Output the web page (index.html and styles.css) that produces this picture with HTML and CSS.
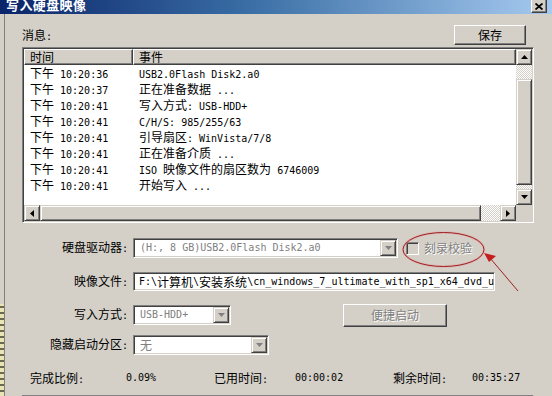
FILE: index.html
```html
<!DOCTYPE html>
<html lang="zh-CN">
<head>
    <meta charset="UTF-8">
    <title>写入硬盘映像</title>
    <link rel="stylesheet" href="styles.css">
</head>
<body>
    <div class="titlebar">
        <span class="title">写入硬盘映像</span>
        <span class="close">
            <svg width="8" height="7" viewBox="0 0 8 7"><path d="M0.5 0.5 L7.5 6.5 M7.5 0.5 L0.5 6.5" stroke="#000" stroke-width="1.8" fill="none"/></svg>
        </span>
    </div>

    <div class="frame">
        <div class="behind"></div>

        <div class="dlg">
            <!-- 消息 -->
            <div class="msg-head">
                <span class="lbl">消息<span class="m">:</span></span>
                <button class="btn save">保存</button>
            </div>

            <div class="list">
                <div class="list-view">
                    <div class="list-header">
                        <div class="hcell">时间</div>
                        <div class="hcell">事件</div>
                    </div>
                    <div class="row"><div class="c1">下午<span class="m"> 10:20:36</span></div><div class="c2"><span class="m">USB2.0Flash Disk2.a0</span></div></div>
                    <div class="row"><div class="c1">下午<span class="m"> 10:20:37</span></div><div class="c2">正在准备数据<span class="m"> ...</span></div></div>
                    <div class="row"><div class="c1">下午<span class="m"> 10:20:41</span></div><div class="c2">写入方式<span class="m">: USB-HDD+</span></div></div>
                    <div class="row"><div class="c1">下午<span class="m"> 10:20:41</span></div><div class="c2"><span class="m">C/H/S: 985/255/63</span></div></div>
                    <div class="row"><div class="c1">下午<span class="m"> 10:20:41</span></div><div class="c2">引导扇区<span class="m">: WinVista/7/8</span></div></div>
                    <div class="row"><div class="c1">下午<span class="m"> 10:20:41</span></div><div class="c2">正在准备介质<span class="m"> ...</span></div></div>
                    <div class="row"><div class="c1">下午<span class="m"> 10:20:41</span></div><div class="c2"><span class="m">ISO </span>映像文件的扇区数为<span class="m"> 6746009</span></div></div>
                    <div class="row"><div class="c1">下午<span class="m"> 10:20:41</span></div><div class="c2">开始写入<span class="m"> ...</span></div></div>
                </div>

                <div class="vscroll">
                    <div class="sbtn"><svg width="7" height="4" viewBox="0 0 7 4"><path d="M3.5 0 L7 4 L0 4 Z" fill="#000"/></svg></div>
                    <div class="track" style="height: 14px"></div>
                    <div class="thumb" style="height: 106px"></div>
                    <div class="track fill"></div>
                    <div class="sbtn"><svg width="7" height="4" viewBox="0 0 7 4"><path d="M0 0 L7 0 L3.5 4 Z" fill="#000"/></svg></div>
                </div>

                <div class="hscroll">
                    <div class="sbtn"><svg width="4" height="7" viewBox="0 0 4 7"><path d="M0 3.5 L4 0 L4 7 Z" fill="#000"/></svg></div>
                    <div class="thumb" style="width: 441px"></div>
                    <div class="track fill"></div>
                    <div class="sbtn"><svg width="4" height="7" viewBox="0 0 4 7"><path d="M0 0 L4 3.5 L0 7 Z" fill="#000"/></svg></div>
                </div>

                <div class="corner"></div>
            </div>

            <!-- 设置 -->
            <div class="form">
                <div class="frow r1">
                    <span class="lab">硬盘驱动器<span class="m">:</span></span>
                    <div class="combo w-drive">
                        <span class="val m">(H:, 8 GB)USB2.0Flash Disk2.a0</span>
                        <span class="drop"><svg width="7" height="4" viewBox="0 0 7 4"><path d="M0 0 L7 0 L3.5 4 Z" fill="#808080"/></svg></span>
                    </div>
                    <span class="check"></span>
                    <span class="check-lbl">刻录校验</span>
                </div>

                <div class="frow r2">
                    <span class="lab">映像文件<span class="m">:</span></span>
                    <div class="edit"><span class="m">F:\</span>计算机<span class="m">\</span>安装系统<span class="m">\cn_windows_7_ultimate_with_sp1_x64_dvd_u</span></div>
                </div>

                <div class="frow r3">
                    <span class="lab">写入方式<span class="m">:</span></span>
                    <div class="combo w-mode">
                        <span class="val m">USB-HDD+</span>
                        <span class="drop"><svg width="7" height="4" viewBox="0 0 7 4"><path d="M0 0 L7 0 L3.5 4 Z" fill="#808080"/></svg></span>
                    </div>
                    <button class="btn quick" disabled>便捷启动</button>
                </div>

                <div class="frow r4">
                    <span class="lab">隐藏启动分区<span class="m">:</span></span>
                    <div class="combo w-hide">
                        <span class="val">无</span>
                        <span class="drop"><svg width="7" height="4" viewBox="0 0 7 4"><path d="M0 0 L7 0 L3.5 4 Z" fill="#808080"/></svg></span>
                    </div>
                </div>
            </div>

            <div class="stats">
                <span>完成比例<span class="m">:</span></span>
                <span class="m">0.09%</span>
                <span>已用时间<span class="m">:</span></span>
                <span class="m">00:00:02</span>
                <span>剩余时间<span class="m">:</span></span>
                <span class="m">00:35:27</span>
            </div>

            <div class="progress"></div>
        </div>
    </div>

    <!-- 红色标注 -->
    <svg class="annot" width="552" height="396" viewBox="0 0 552 396">
        <ellipse cx="443.5" cy="249.5" rx="40.5" ry="17" fill="none" stroke="#e8a0a0" stroke-width="2.5" opacity="0.5"/>
        <ellipse cx="443.5" cy="249.5" rx="40.5" ry="17" fill="none" stroke="#9c2020" stroke-width="1"/>
        <line x1="518" y1="291" x2="490" y2="258" stroke="#9c2020" stroke-width="1"/>
        <polygon points="484,253 489,262 496,256" fill="#c41e1e"/>
    </svg>
</body>
</html>
```

FILE: styles.css
```css
* {
    box-sizing: border-box;
}

body {
    margin: 0;
    width: 552px;
    height: 396px;
    overflow: hidden;
    position: relative;
    background: #d4d0c8;
    color: #000;
    font-family: "Noto Sans CJK SC", sans-serif;
    font-size: 12px;
}

.m {
    font-family: "DejaVu Sans Mono", monospace;
    font-size: 10px;
}

/* title bar */
.titlebar {
    height: 14px;
    display: flex;
    justify-content: space-between;
    padding: 0 5px 0 6px;
    background: linear-gradient(to right, #0a246a, #3a6ea5 45%, #a6caf0);
    overflow: hidden;
}

.title {
    color: #fff;
    font-weight: bold;
    font-size: 13px;
    line-height: 10px;
    letter-spacing: 0.4px;
}

.close {
    width: 16px;
    height: 13px;
    display: flex;
    align-items: center;
    justify-content: center;
    background: #d4d0c8;
    border-right: 1px solid #404040;
    border-bottom: 1px solid #404040;
    border-left: 1px solid #fff;
    box-shadow: inset -1px -1px #808080;
}

/* body */
.frame {
    display: flex;
    height: 382px;
}

.behind {
    width: 5px;
    border-right: 1px solid #808080;
    background:
        linear-gradient(#d4d0c8 0 290px, transparent 290px),
        repeating-linear-gradient(#e8e4b4 0 4px, #6a6a50 4px 6px),
        #f0efe8;
}

.dlg {
    flex: 1;
    padding: 11px 18px 0 17px;
}

.msg-head {
    display: flex;
    justify-content: space-between;
    height: 22px;
}

.msg-head .lbl {
    align-self: flex-end;
    line-height: 16px;
    padding-bottom: 2px;
}

.btn {
    font: inherit;
    padding: 0;
    color: #000;
    background: #d4d0c8;
    border: 1px solid;
    border-color: #fff #404040 #404040 #fff;
    box-shadow: inset -1px -1px #808080;
    line-height: 16px;
}

.save {
    width: 72px;
    height: 20px;
    margin-right: 8px;
}

/* list */
.list {
    width: 512px;
    height: 176px;
    display: grid;
    grid-template-columns: 1fr 16px;
    grid-template-rows: 1fr 16px;
    border: 1px solid;
    border-color: #808080 #fff #fff #808080;
    box-shadow: inset 1px 1px #404040, inset -1px -1px #d4d0c8;
    padding: 1px;
}

.list-view {
    background: #fff;
    overflow: hidden;
}

.list-header,
.row {
    display: grid;
    grid-template-columns: 109px 1fr;
}

.hcell {
    height: 16px;
    line-height: 14px;
    padding-left: 5px;
    background: #d4d0c8;
    border: 1px solid;
    border-color: #fff #404040 #404040 #fff;
    box-shadow: inset -1px -1px #808080;
}

.row {
    height: 16px;
    line-height: 16px;
    white-space: nowrap;
}

.c1,
.c2 {
    padding-left: 6px;
}

.sbtn {
    width: 16px;
    height: 16px;
    flex: none;
    display: flex;
    align-items: center;
    justify-content: center;
    background: #d4d0c8;
    border: 1px solid;
    border-color: #d4d0c8 #404040 #404040 #d4d0c8;
    box-shadow: inset 1px 1px #fff, inset -1px -1px #808080;
}

.track {
    background: repeating-conic-gradient(#d4d0c8 0 25%, #fff 0 50%) 0 0 / 2px 2px;
}

.track.fill {
    flex: 1;
}

.thumb {
    flex: none;
    background: #d4d0c8;
    border: 1px solid;
    border-color: #d4d0c8 #404040 #404040 #d4d0c8;
    box-shadow: inset 1px 1px #fff, inset -1px -1px #808080;
}

.vscroll {
    display: flex;
    flex-direction: column;
}

.hscroll {
    display: flex;
}

.corner {
    background: #d4d0c8;
}

/* form */
.form {
    margin-top: 15px;
}

.frow {
    display: flex;
    align-items: center;
    height: 20px;
}

.r2 {
    margin-top: 14px;
    height: 19px;
}

.r3 {
    margin-top: 14px;
}

.r4 {
    margin-top: 10px;
}

.lab {
    width: 106px;
    margin-right: 5px;
    text-align: right;
    line-height: 16px;
}

.combo,
.edit {
    height: 100%;
    display: flex;
    background: #fff;
    border: 1px solid;
    border-color: #808080 #fff #fff #808080;
    box-shadow: inset 1px 1px #404040, inset -1px -1px #d4d0c8;
    padding: 1px;
}

.combo .val {
    flex: 1;
    padding-left: 5px;
    line-height: 16px;
    color: #808080;
    white-space: nowrap;
    overflow: hidden;
}

.combo .drop {
    width: 16px;
    height: 16px;
    display: flex;
    align-items: center;
    justify-content: center;
    background: #d4d0c8;
    border: 1px solid;
    border-color: #d4d0c8 #404040 #404040 #d4d0c8;
    box-shadow: inset 1px 1px #fff, inset -1px -1px #808080;
}

.w-drive {
    width: 265px;
}

.w-mode {
    width: 98px;
}

.w-hide {
    width: 136px;
}

.edit {
    width: 362px;
    padding-left: 5px;
    line-height: 15px;
    white-space: nowrap;
    overflow: hidden;
}

.check {
    width: 13px;
    height: 13px;
    margin-left: 8px;
    background: #d4d0c8;
    border: 1px solid;
    border-color: #808080 #fff #fff #808080;
    box-shadow: inset 1px 1px #404040, inset -1px -1px #d4d0c8;
}

.check-lbl,
.quick {
    color: #808080;
    text-shadow: 1px 1px #fff;
}

.check-lbl {
    margin-left: 5px;
    line-height: 16px;
}

.quick {
    width: 104px;
    height: 23px;
    flex: none;
    margin-left: 112px;
}

/* stats */
.stats {
    margin-top: 15px;
    padding-left: 8px;
    display: grid;
    grid-template-columns: 96px 88px 81px 98px 79px auto;
    line-height: 16px;
}

.progress {
    margin-top: 7px;
    width: 512px;
    height: 20px;
    border: 1px solid;
    border-color: #808080 #fff #fff #808080;
    box-shadow: inset 1px 1px #404040;
}

.annot {
    position: absolute;
    top: 0;
    left: 0;
    pointer-events: none;
}
```
